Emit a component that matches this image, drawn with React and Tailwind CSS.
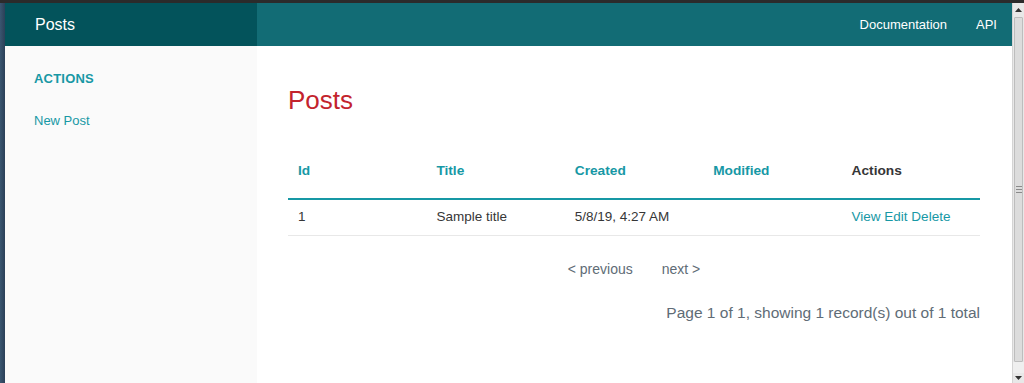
import React from "react";

export default function App() {
  const font = { fontFamily: '"Liberation Sans", Arial, sans-serif' };
  return (
    <div className="w-[1024px] h-[383px] overflow-hidden flex flex-col bg-[#2a2a2a]" style={font}>
      <div className="h-[3px] bg-[#2b2b2b]" />
      <div className="flex flex-1 min-h-0">
        <div className="w-[5px] bg-gradient-to-r from-[#3a5670] to-[#2b4058]" />
        <div className="flex-1 flex flex-col bg-white min-w-0">
          <div className="h-[43px] flex">
            <div className="w-[252px] bg-[#03535b] flex items-center pl-[30px] text-white text-[16px]">Posts</div>
            <div className="flex-1 bg-[#126c75] flex items-center justify-end pr-[15px] gap-[29px] text-white text-[13px]">
              <span>Documentation</span>
              <span>API</span>
            </div>
          </div>
          <div className="flex flex-1">
            <div className="w-[252px] bg-[#fafafa] pl-[29px] pt-[23px]">
              <div className="text-[13px] font-bold text-[#1798a5] tracking-[0.2px]">ACTIONS</div>
              <div className="mt-[22px] text-[13px] text-[#1798a5]">New Post</div>
            </div>
            <div className="flex-1 pl-[31px] pr-[32px]">
              <h1 className="mt-[41px] text-[26px] text-[#c3232d] leading-none">Posts</h1>
              <div className="mt-[39px]">
                <div className="grid grid-cols-5 pt-[11px] pb-[19px] leading-[16px] border-b-2 border-[#1798a5] text-[13.7px] font-bold">
                  <div className="pl-[10px] text-[#1798a5]">Id</div>
                  <div className="pl-[10px] text-[#1798a5]">Title</div>
                  <div className="pl-[10px] text-[#1798a5]">Created</div>
                  <div className="pl-[10px] text-[#1798a5]">Modified</div>
                  <div className="pl-[10px] text-[#363637]">Actions</div>
                </div>
                <div className="grid grid-cols-5 pt-[9px] pb-[10px] leading-[16px] border-b border-[#e8e8e8] text-[13.5px] text-[#363637]">
                  <div className="pl-[10px]">1</div>
                  <div className="pl-[10px]">Sample title</div>
                  <div className="pl-[10px]">5/8/19, 4:27 AM</div>
                  <div className="pl-[10px]"></div>
                  <div className="pl-[10px] text-[#1798a5]">View Edit Delete</div>
                </div>
              </div>
              <div className="flex justify-center gap-[29px] mt-[25px] leading-[16px] text-[14px] text-[#606c76]">
                <span>&lt; previous</span>
                <span>next &gt;</span>
              </div>
              <div className="text-right mt-[27px] leading-[18px] text-[15.5px] text-[#606c76]">Page 1 of 1, showing 1 record(s) out of 1 total</div>
            </div>
          </div>
        </div>
        <div className="w-[12px] bg-[#e8e8e8] flex flex-col border-l border-[#d4d4d4]">
          <div className="h-[14px] flex items-center justify-center">
            <svg width="7" height="4" viewBox="0 0 7 4"><path d="M0 4 L3.5 0 L7 4 Z" fill="#333" /></svg>
          </div>
          <div className="h-[345px] mx-[1px] bg-[#dcdcdc] border border-[#bdbdbd] rounded-[1px] flex items-center justify-center">
            <div className="flex flex-col gap-[2px]">
              <div className="w-[6px] h-[1px] bg-[#8a8a8a]" />
              <div className="w-[6px] h-[1px] bg-[#8a8a8a]" />
              <div className="w-[6px] h-[1px] bg-[#8a8a8a]" />
            </div>
          </div>
          <div className="flex-1 bg-[#efefef]" />
          <div className="h-[10px] flex items-center justify-center">
            <svg width="7" height="4" viewBox="0 0 7 4"><path d="M0 0 L3.5 4 L7 0 Z" fill="#333" /></svg>
          </div>
        </div>
      </div>
    </div>
  );
}
